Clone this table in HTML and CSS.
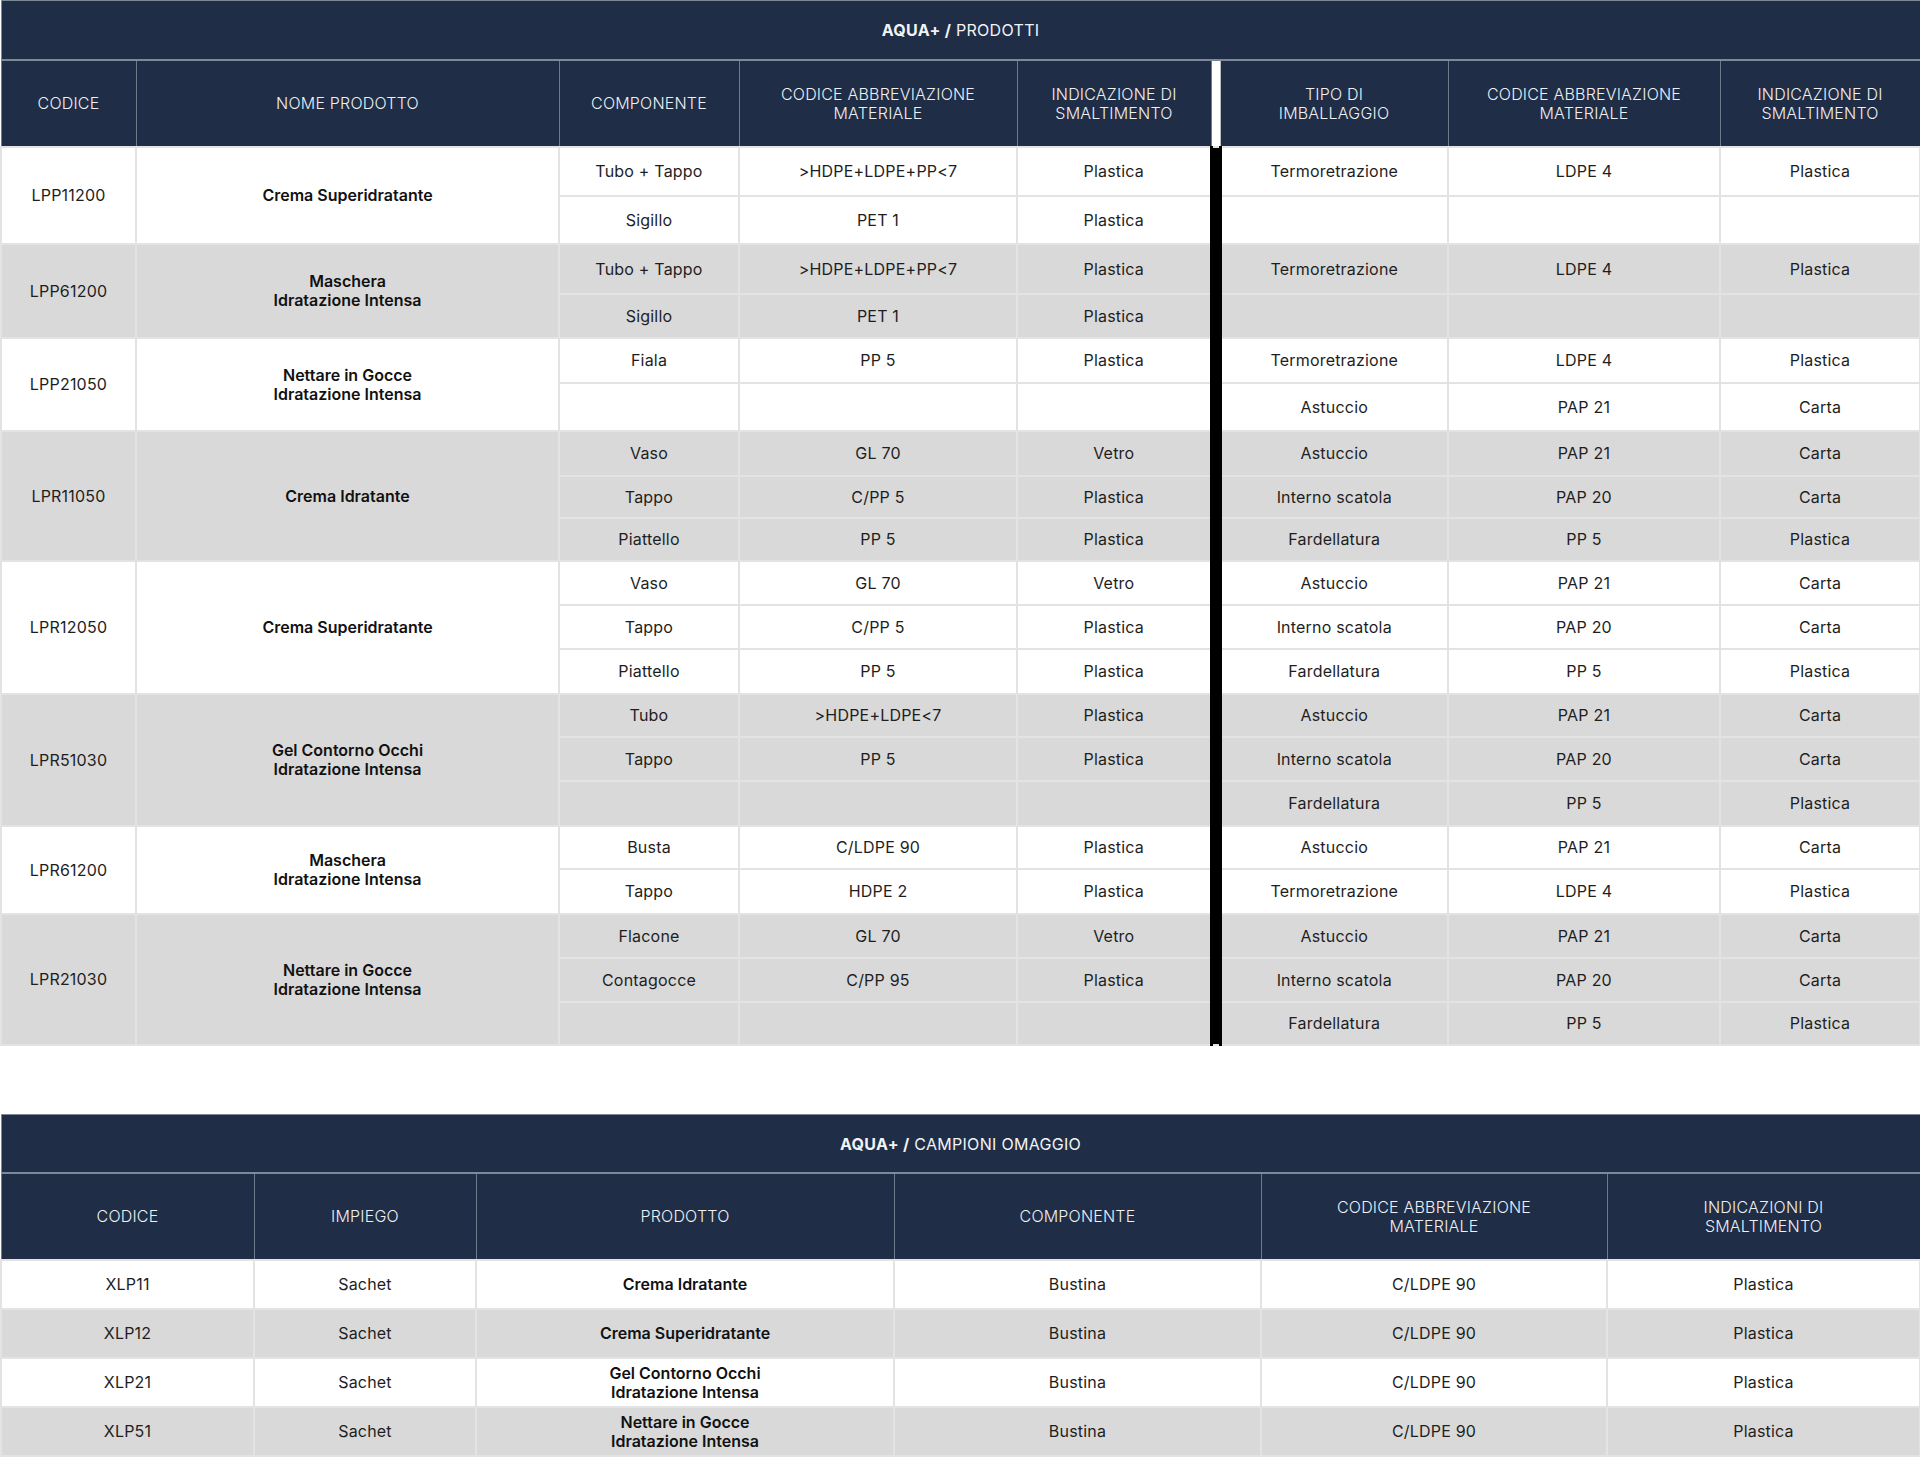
FILE: index.html
```html
<!DOCTYPE html>
<html lang="it">
<head>
<meta charset="utf-8">
<title>AQUA+ Prodotti</title>
<link rel="stylesheet" href="styles.css">
</head>
<body>
<div class="page">
<table class="grid t1">
  <colgroup>
    <col class="c135"><col class="c423"><col class="c180"><col class="c278"><col class="c194"><col class="c9"><col class="c228"><col class="c272"><col class="c200">
  </colgroup>
  <thead>
    <tr class="title-row"><th colspan="9" class="title"><b>AQUA+ /</b> PRODOTTI</th></tr>
    <tr class="head-row">
      <th>CODICE</th><th>NOME PRODOTTO</th><th>COMPONENTE</th><th>CODICE ABBREVIAZIONE<br>MATERIALE</th><th>INDICAZIONE DI<br>SMALTIMENTO</th><th class="gap"></th><th>TIPO DI<br>IMBALLAGGIO</th><th>CODICE ABBREVIAZIONE<br>MATERIALE</th><th>INDICAZIONE DI<br>SMALTIMENTO</th>
    </tr>
  </thead>
  <tbody>
    <tr class="w h49"><td rowspan="2">LPP11200</td><td rowspan="2" class="name">Crema Superidratante</td><td>Tubo + Tappo</td><td>&gt;HDPE+LDPE+PP&lt;7</td><td>Plastica</td><td rowspan="20" class="bar"></td><td>Termoretrazione</td><td>LDPE 4</td><td>Plastica</td></tr>
    <tr class="w h48"><td>Sigillo</td><td>PET 1</td><td>Plastica</td><td></td><td></td><td></td></tr>

    <tr class="g h50"><td rowspan="2">LPP61200</td><td rowspan="2" class="name">Maschera<br>Idratazione Intensa</td><td>Tubo + Tappo</td><td>&gt;HDPE+LDPE+PP&lt;7</td><td>Plastica</td><td>Termoretrazione</td><td>LDPE 4</td><td>Plastica</td></tr>
    <tr class="g h44"><td>Sigillo</td><td>PET 1</td><td>Plastica</td><td></td><td></td><td></td></tr>

    <tr class="w h45"><td rowspan="2">LPP21050</td><td rowspan="2" class="name">Nettare in Gocce<br>Idratazione Intensa</td><td>Fiala</td><td>PP 5</td><td>Plastica</td><td>Termoretrazione</td><td>LDPE 4</td><td>Plastica</td></tr>
    <tr class="w h48"><td></td><td></td><td></td><td>Astuccio</td><td>PAP 21</td><td>Carta</td></tr>

    <tr class="g h45"><td rowspan="3">LPR11050</td><td rowspan="3" class="name">Crema Idratante</td><td>Vaso</td><td>GL 70</td><td>Vetro</td><td>Astuccio</td><td>PAP 21</td><td>Carta</td></tr>
    <tr class="g h42"><td>Tappo</td><td>C/PP 5</td><td>Plastica</td><td>Interno scatola</td><td>PAP 20</td><td>Carta</td></tr>
    <tr class="g h43"><td>Piattello</td><td>PP 5</td><td>Plastica</td><td>Fardellatura</td><td>PP 5</td><td>Plastica</td></tr>

    <tr class="w h44"><td rowspan="3">LPR12050</td><td rowspan="3" class="name">Crema Superidratante</td><td>Vaso</td><td>GL 70</td><td>Vetro</td><td>Astuccio</td><td>PAP 21</td><td>Carta</td></tr>
    <tr class="w h44"><td>Tappo</td><td>C/PP 5</td><td>Plastica</td><td>Interno scatola</td><td>PAP 20</td><td>Carta</td></tr>
    <tr class="w h45"><td>Piattello</td><td>PP 5</td><td>Plastica</td><td>Fardellatura</td><td>PP 5</td><td>Plastica</td></tr>

    <tr class="g h43"><td rowspan="3">LPR51030</td><td rowspan="3" class="name">Gel Contorno Occhi<br>Idratazione Intensa</td><td>Tubo</td><td>&gt;HDPE+LDPE&lt;7</td><td>Plastica</td><td>Astuccio</td><td>PAP 21</td><td>Carta</td></tr>
    <tr class="g h44"><td>Tappo</td><td>PP 5</td><td>Plastica</td><td>Interno scatola</td><td>PAP 20</td><td>Carta</td></tr>
    <tr class="g h45"><td></td><td></td><td></td><td>Fardellatura</td><td>PP 5</td><td>Plastica</td></tr>

    <tr class="w h43"><td rowspan="2">LPR61200</td><td rowspan="2" class="name">Maschera<br>Idratazione Intensa</td><td>Busta</td><td>C/LDPE 90</td><td>Plastica</td><td>Astuccio</td><td>PAP 21</td><td>Carta</td></tr>
    <tr class="w h45"><td>Tappo</td><td>HDPE 2</td><td>Plastica</td><td>Termoretrazione</td><td>LDPE 4</td><td>Plastica</td></tr>

    <tr class="g h44"><td rowspan="3">LPR21030</td><td rowspan="3" class="name">Nettare in Gocce<br>Idratazione Intensa</td><td>Flacone</td><td>GL 70</td><td>Vetro</td><td>Astuccio</td><td>PAP 21</td><td>Carta</td></tr>
    <tr class="g h44"><td>Contagocce</td><td>C/PP 95</td><td>Plastica</td><td>Interno scatola</td><td>PAP 20</td><td>Carta</td></tr>
    <tr class="g h43"><td></td><td></td><td></td><td>Fardellatura</td><td>PP 5</td><td>Plastica</td></tr>
  </tbody>
</table>

<table class="grid t2">
  <colgroup>
    <col class="c253"><col class="c222"><col class="c418"><col class="c367"><col class="c346"><col class="c313">
  </colgroup>
  <thead>
    <tr class="title-row"><th colspan="6" class="title title2"><b>AQUA+ /</b> CAMPIONI OMAGGIO</th></tr>
    <tr class="head-row head2">
      <th>CODICE</th><th>IMPIEGO</th><th>PRODOTTO</th><th>COMPONENTE</th><th>CODICE ABBREVIAZIONE<br>MATERIALE</th><th>INDICAZIONI DI<br>SMALTIMENTO</th>
    </tr>
  </thead>
  <tbody>
    <tr class="w h49"><td>XLP11</td><td>Sachet</td><td class="name">Crema Idratante</td><td>Bustina</td><td>C/LDPE 90</td><td>Plastica</td></tr>
    <tr class="g h49"><td>XLP12</td><td>Sachet</td><td class="name">Crema Superidratante</td><td>Bustina</td><td>C/LDPE 90</td><td>Plastica</td></tr>
    <tr class="w h49"><td>XLP21</td><td>Sachet</td><td class="name">Gel Contorno Occhi<br>Idratazione Intensa</td><td>Bustina</td><td>C/LDPE 90</td><td>Plastica</td></tr>
    <tr class="g h49"><td>XLP51</td><td>Sachet</td><td class="name">Nettare in Gocce<br>Idratazione Intensa</td><td>Bustina</td><td>C/LDPE 90</td><td>Plastica</td></tr>
  </tbody>
</table>
</div>
</body>
</html>
```

FILE: styles.css
```css
html, body {
  margin: 0;
  padding: 0;
  background: #ffffff;
}

body {
  font-family: "Inter", "Lato", "Liberation Sans", sans-serif;
  color: #1c1c1c;
  font-size: 16px;
}

.page {
  width: 1919px;
  display: flex;
  flex-direction: column;
  gap: 68px;
}

.grid {
  width: 1919px;
  table-layout: fixed;
  border-collapse: collapse;
}

.c135 { width: 135px; }
.c423 { width: 423px; }
.c180 { width: 180px; }
.c278 { width: 278px; }
.c194 { width: 194px; }
.c9 { width: 9px; }
.c228 { width: 228px; }
.c272 { width: 272px; }
.c200 { width: 200px; }

.c253 { width: 253px; }
.c222 { width: 222px; }
.c418 { width: 418px; }
.c367 { width: 367px; }
.c346 { width: 346px; }
.c313 { width: 313px; }

.title-row th {
  height: 58px;
  padding: 0;
  background: #1f2d47;
  color: #f2f3f5;
  font-weight: 400;
  font-size: 16px;
  letter-spacing: 0.3px;
  text-align: center;
  vertical-align: middle;
  border: 1px solid #7f8898;
  border-bottom: 2px solid #7f8898;
}

.title-row th.title2 {
  height: 57px;
}

.title-row b {
  font-weight: 700;
}

.head-row th {
  height: 85px;
  padding: 0 6px;
  background: #1f2d47;
  color: #eef0f3;
  font-weight: 300;
  font-size: 16px;
  line-height: 19px;
  letter-spacing: 0.2px;
  text-align: center;
  vertical-align: middle;
  border: 1px solid #6f7a8c;
}

.head-row th.gap {
  background: #ffffff;
  padding: 0;
  border-left: 1px solid #b9bec6;
  border-right: 1px solid #b9bec6;
}

tbody td {
  padding: 0 6px;
  text-align: center;
  vertical-align: middle;
  font-size: 16px;
  line-height: 19px;
  letter-spacing: 0.2px;
  border: 2px solid #e3e3e3;
  color: #1e1e1e;
}

tbody tr.w td { background: #ffffff; }
tbody tr.g td { background: #d9d9d9; }

tbody td.name {
  font-weight: 600;
  color: #111111;
  letter-spacing: 0;
}

tbody td.bar,
tbody tr.w td.bar {
  background: #000000;
  padding: 0;
  border-left: 3px solid #000000;
  border-right: 3px solid #000000;
}

.h42 { height: 42px; }
.h43 { height: 43px; }
.h44 { height: 44px; }
.h45 { height: 45px; }
.h48 { height: 48px; }
.h49 { height: 49px; }
.h50 { height: 50px; }
```
